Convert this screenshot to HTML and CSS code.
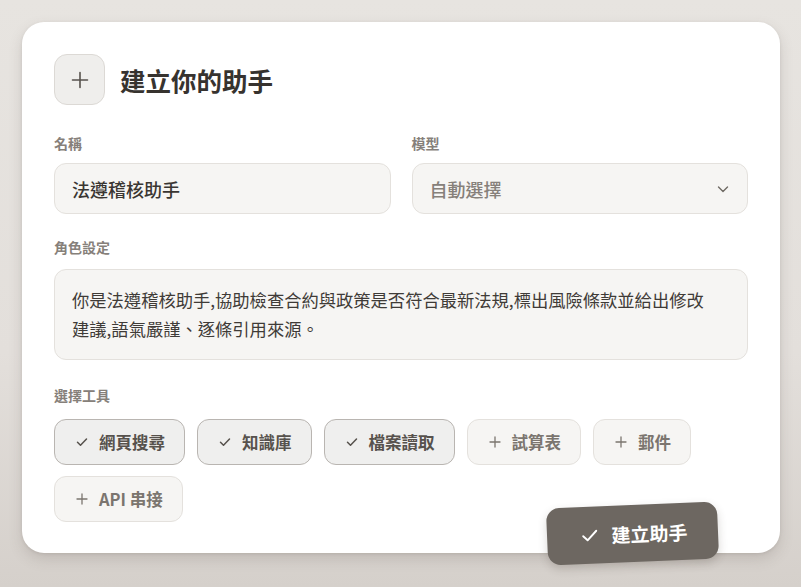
FILE: index.html
```html
<!DOCTYPE html>
<html lang="zh-Hant">
    <head>
        <meta charset="UTF-8" />
        <meta name="viewport" content="width=device-width, initial-scale=1.0" />
        <link rel="stylesheet" href="styles.css">
        <title>建立你的助手</title>
    </head>
    <body>
        <div class="page">
            <div class="card">
                <!-- 標題 -->
                <div class="card-header">
                    <div class="header-icon">
                        <svg width="20" height="20" viewBox="0 0 20 20" fill="none" stroke="currentColor" stroke-width="1.6" stroke-linecap="round">
                            <path d="M10 2.5v15M2.5 10h15" />
                        </svg>
                    </div>
                    <h1 class="header-title">建立你的助手</h1>
                </div>

                <div class="field-row">
                    <div class="field">
                        <div class="field-label">名稱</div>
                        <div class="input">法遵稽核助手</div>
                    </div>
                    <div class="field">
                        <div class="field-label">模型</div>
                        <div class="input input-select">
                            <span class="placeholder">自動選擇</span>
                            <svg width="14" height="14" viewBox="0 0 14 14" fill="none" stroke="currentColor" stroke-width="1.4" stroke-linecap="round" stroke-linejoin="round">
                                <path d="M2.5 5l4.5 4.5L11.5 5" />
                            </svg>
                        </div>
                    </div>
                </div>

                <div class="field field-role">
                    <div class="field-label">角色設定</div>
                    <div class="textarea">你是法遵稽核助手,協助檢查合約與政策是否符合最新法規,標出風險條款並給出修改建議,語氣嚴謹、逐條引用來源。</div>
                </div>

                <div class="field field-tools">
                    <div class="field-label">選擇工具</div>
                    <div class="chips">
                        <div class="chip chip-on">
                            <svg class="chip-mark" viewBox="0 0 12 12" fill="none" stroke="currentColor" stroke-width="1.5" stroke-linecap="round" stroke-linejoin="round"><path d="M1.5 6.3l3 3L10.5 3" /></svg>網頁搜尋
                        </div>
                        <div class="chip chip-on">
                            <svg class="chip-mark" viewBox="0 0 12 12" fill="none" stroke="currentColor" stroke-width="1.5" stroke-linecap="round" stroke-linejoin="round"><path d="M1.5 6.3l3 3L10.5 3" /></svg>知識庫
                        </div>
                        <div class="chip chip-on">
                            <svg class="chip-mark" viewBox="0 0 12 12" fill="none" stroke="currentColor" stroke-width="1.5" stroke-linecap="round" stroke-linejoin="round"><path d="M1.5 6.3l3 3L10.5 3" /></svg>檔案讀取
                        </div>
                        <div class="chip">
                            <svg class="chip-mark" viewBox="0 0 12 12" fill="none" stroke="currentColor" stroke-width="1.3" stroke-linecap="round"><path d="M6 1v10M1 6h10" /></svg>試算表
                        </div>
                        <div class="chip">
                            <svg class="chip-mark" viewBox="0 0 12 12" fill="none" stroke="currentColor" stroke-width="1.3" stroke-linecap="round"><path d="M6 1v10M1 6h10" /></svg>郵件
                        </div>
                        <div class="chip">
                            <svg class="chip-mark" viewBox="0 0 12 12" fill="none" stroke="currentColor" stroke-width="1.3" stroke-linecap="round"><path d="M6 1v10M1 6h10" /></svg>API 串接
                        </div>
                    </div>
                </div>

                <button class="submit-btn">
                    <svg class="submit-mark" viewBox="0 0 16 16" fill="none" stroke="currentColor" stroke-width="1.8" stroke-linecap="round" stroke-linejoin="round"><path d="M2 8.6l4 4L14.5 4" /></svg>建立助手
                </button>
            </div>
        </div>
    </body>
</html>
```

FILE: styles.css
```css
/* 基礎樣式 */
body,
html {
    margin: 0;
    padding: 0;
    height: 100%;
    width: 100%;
    overflow: hidden;
    font-family: "Noto Sans CJK TC", "Noto Sans", sans-serif;
}

.page {
    box-sizing: border-box;
    height: 100%;
    padding: 22px 21px 0 22px;
    background: linear-gradient(
        180deg,
        #e7e4e0 0%,
        #e3dfdb 60%,
        #d5d0cb 100%
    );
}

/* 卡片 */
.card {
    position: relative;
    box-sizing: border-box;
    width: 758px;
    height: 531px;
    padding: 32px 32px 0 32px;
    background-color: #ffffff;
    border-radius: 22px;
    box-shadow: 0 6px 14px rgba(90, 80, 70, 0.18), 0 1px 3px rgba(90, 80, 70, 0.12);
}

.card-header {
    display: flex;
    align-items: center;
    gap: 15px;
}

.header-icon {
    box-sizing: border-box;
    width: 51px;
    height: 51px;
    display: flex;
    align-items: center;
    justify-content: center;
    background-color: #efeeec;
    border: 1px solid #dcd9d5;
    border-radius: 13px;
    color: #57524d;
}

.header-title {
    margin: 0;
    font-size: 25.5px;
    font-weight: 700;
    color: #37332f;
    line-height: 1;
}

/* 表單欄位 */
.field-row {
    display: grid;
    grid-template-columns: 1fr 1fr;
    gap: 21px;
    margin-top: 28px;
}

.field-label {
    font-size: 14px;
    font-weight: 700;
    color: #86807a;
    line-height: 20px;
    margin-bottom: 10px;
}

.input {
    box-sizing: border-box;
    height: 51px;
    display: flex;
    align-items: center;
    padding: 0 17px;
    background-color: #f6f5f3;
    border: 1px solid #e4e1dd;
    border-radius: 12px;
    font-size: 18px;
    font-weight: 500;
    color: #3a3632;
}

.input-select {
    justify-content: space-between;
    color: #6f6a64;
}

.placeholder {
    font-weight: 500;
    color: #86807a;
}

.field-role {
    margin-top: 23px;
}

.field-role .field-label {
    margin-bottom: 12px;
}

.textarea {
    box-sizing: border-box;
    height: 91px;
    padding: 15px 40px 15px 17px;
    background-color: #f6f5f3;
    border: 1px solid #e4e1dd;
    border-radius: 12px;
    font-size: 17.3px;
    line-height: 29px;
    color: #3f3b37;
}

.field-tools {
    margin-top: 25px;
}

.field-tools .field-label {
    margin-bottom: 14px;
}

/* 工具標籤 */
.chips {
    display: flex;
    flex-wrap: wrap;
    gap: 11px 12px;
    width: 660px;
}

.chip {
    box-sizing: border-box;
    height: 46px;
    display: flex;
    align-items: center;
    padding: 0 19px 0 21px;
    background-color: #f6f5f3;
    border: 1px solid #e4e1dd;
    border-radius: 12px;
    font-size: 16.5px;
    font-weight: 700;
    color: #7b756f;
}

.chip-on {
    background-color: #efefee;
    border-color: #b9b5b1;
    color: #57524d;
}

.chip-mark {
    width: 12px;
    height: 12px;
    margin-right: 11px;
    flex: none;
}

/* 送出按鈕（略微傾斜） */
.submit-btn {
    position: absolute;
    right: 62px;
    bottom: -9px;
    width: 171px;
    height: 57px;
    display: flex;
    align-items: center;
    justify-content: center;
    gap: 13px;
    padding: 0 0 0 4px;
    border: none;
    border-radius: 13px;
    background-color: #6d6761;
    color: #ffffff;
    font-family: inherit;
    font-size: 19px;
    font-weight: 700;
    transform: rotate(-2.4deg);
    box-shadow: 0 4px 10px rgba(60, 50, 40, 0.2);
}

.submit-mark {
    width: 17px;
    height: 17px;
    flex: none;
}
```
